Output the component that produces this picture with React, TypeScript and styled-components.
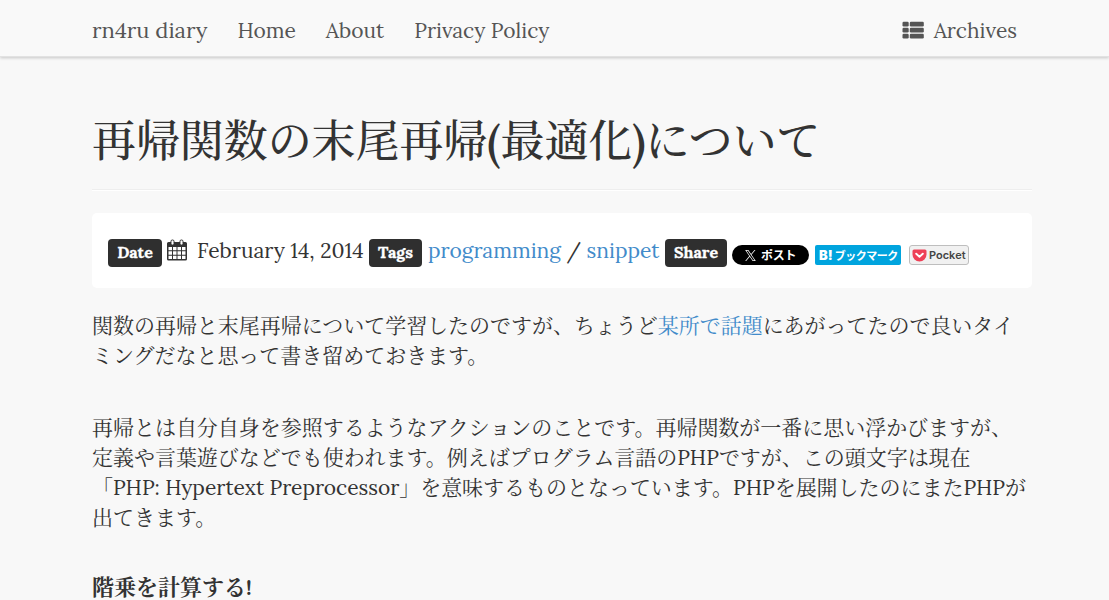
import React from "react";
import styled, { createGlobalStyle } from "styled-components";

const body = `Lora, "Noto Serif CJK JP", "Noto Sans CJK JP", serif`;

const GlobalStyle = createGlobalStyle`
  * { box-sizing: border-box; }
  body { margin: 0; background: #f8f8f8; color: #333; overflow: hidden; }
`;

const Page = styled.div`
  height: 600px;
  overflow: hidden;
  font: 21px/30px ${body};
`;

const NavBar = styled.header`
  height: 57px;
  padding: 0 92px;
  display: flex;
  align-items: center;
  background: #f9f9f9;
  border-bottom: 1px solid #e2e2e2;
  box-shadow: 0 1px 3px rgba(0, 0, 0, 0.2);
`;

const NavItem = styled.a`
  display: flex;
  align-items: center;
  margin-right: 30px;
  padding-top: 5px;
  color: #555;
  white-space: nowrap;
`;

const Brand = styled(NavItem)`
  padding-top: 3px;
  font-size: 22px;
`;

const NavEnd = styled(NavItem)`
  margin: 0 0 0 auto;
  padding-top: 5px;
  gap: 10px;

  svg { margin-top: -2px; }
`;

const Article = styled.main`
  width: 940px;
  margin-left: 92px;
`;

const Title = styled.h1`
  margin: 0;
  height: 133px;
  padding-top: 60px;
  border-bottom: 1px solid #eee;
  box-shadow: 0 1px 0 #fff;
  font-size: 44px;
  line-height: 49px;
  font-weight: 500;
  letter-spacing: -0.08px;
  white-space: nowrap;
`;

const Meta = styled.section`
  display: flex;
  height: 75px;
  margin-top: 23px;
  padding: 26px 16px 0;
  border-radius: 5px;
  background: #fff;
`;

const Label = styled.span<{ $width: number }>`
  flex: none;
  width: ${(p) => p.$width}px;
  height: 28px;
  border-radius: 4px;
  background: #2f2f2f;
  color: #fff;
  font: 700 16px/27px ${body};
  -webkit-text-stroke: 0.3px #fff;
  text-align: center;
`;

const MetaText = styled.div<{ $width: number; $indent: number }>`
  flex: none;
  width: ${(p) => p.$width}px;
  height: 24px;
  padding-left: ${(p) => p.$indent}px;
  line-height: 24px;
  white-space: nowrap;
`;

const DateText = styled(MetaText)`
  display: flex;
  gap: 10px;
`;

const Link = styled.a`
  color: #428bca;
`;

const Shares = styled.div`
  display: flex;
  gap: 6px;
  margin: 6px 0 0 5px;
  color: #fff;
  font: 700 12px/20px "Noto Sans CJK JP", sans-serif;
`;

const PostButton = styled.span`
  width: 77px;
  height: 20px;
  border-radius: 10px;
  background: #000;
  display: flex;
  align-items: center;
  padding-left: 13px;
  gap: 5px;
  font-weight: 700;
  line-height: 18px;
  letter-spacing: -0.2px;
  white-space: nowrap;
`;

const HatenaButton = styled.span`
  width: 86px;
  height: 20px;
  border-radius: 2px;
  background: #00a4de;
  display: flex;
  align-items: center;
  padding-left: 4px;
  gap: 2px;
  font-size: 11px;
  letter-spacing: -0.5px;
  white-space: nowrap;

  b { font: 900 13px/20px Inter, sans-serif; letter-spacing: 0; }
`;

const PocketButton = styled.span`
  width: 60px;
  height: 20px;
  margin-left: 2px;
  border: 1px solid #bebebe;
  border-radius: 3px;
  background: #f1f1f1;
  color: #444;
  display: flex;
  align-items: center;
  padding-left: 2px;
  gap: 2px;
  font: 600 11px/18px Inter, sans-serif;
`;

const Paragraph = styled.p<{ $top: number }>`
  margin: ${(p) => p.$top}px 0 0;
  letter-spacing: -0.03px;
`;

const Line = styled.span`
  display: block;
  height: 30px;
  white-space: nowrap;
`;

const SubTitle = styled.h4`
  margin: 39px 0 0;
  font-size: 22px;
  line-height: 30px;
  font-weight: 700;
`;

const ListIcon = () => (
  <svg width="22" height="18" viewBox="0 0 22 18" fill="#555">
    {[0.7, 6.7, 12.7].map((y) => (
      <React.Fragment key={y}>
        <rect x="0.5" y={y} width="6.2" height="4.8" rx="1.2" />
        <rect x="7.8" y={y} width="14" height="4.8" rx="1.2" />
      </React.Fragment>
    ))}
  </svg>
);

const CalendarIcon = () => (
  <svg width="20" height="22" viewBox="0 0 20 22">
    <path fill="#333" fillRule="evenodd" d="M1.5 3H18.5Q20 3 20 4.5V20Q20 21.500 18.500 21.500H1.500Q0 21.500 0 20V4.500Q0 3 1.500 3ZM1.500 8V11.300H5V8ZM6 8V11.300H9.500V8ZM10.500 8V11.300H14V8ZM15 8V11.300H18.500V8ZM1.500 12.300V15.700H5V12.300ZM6 12.300V15.700H9.500V12.300ZM10.500 12.300V15.700H14V12.300ZM15 12.300V15.700H18.500V12.300ZM1.500 16.700V20H5V16.700ZM6 16.700V20H9.500V16.700ZM10.500 16.700V20H14V16.700ZM15 16.700V20H18.500V16.700Z" />
    <rect x="4" y="1" width="3" height="5" rx="1.3" fill="#fff" stroke="#333" />
    <rect x="13" y="1" width="3" height="5" rx="1.3" fill="#fff" stroke="#333" />
  </svg>
);

const XIcon = () => (
  <svg width="11" height="11" viewBox="0 0 24 24" fill="#fff">
    <path d="M14.200 10.200 22.800 0H20.700L13.300 8.800 7.300 0H.4L9.400 13.300.4 24H2.500L10.400 14.700 16.700 24H23.600ZM3.200 1.600H6.400L20.700 22.500H17.500Z" />
  </svg>
);

const PocketIcon = () => (
  <svg width="15" height="13" viewBox="0 0 15 13">
    <path fill="#ee4056" d="M2 .5H13Q14.500 .5 14.500 2V5.500A7 7 0 0 1 .5 5.500V2Q.5 .5 2 .5Z" />
    <path d="M4.200 4.700 7.500 7.800 10.800 4.700" fill="none" stroke="#fff" strokeWidth="1.900" strokeLinecap="round" strokeLinejoin="round" />
  </svg>
);

export default function App() {
  return (
    <Page>
      <GlobalStyle />
      <NavBar>
        <Brand>rn4ru diary</Brand>
        <NavItem>Home</NavItem>
        <NavItem>About</NavItem>
        <NavItem>Privacy Policy</NavItem>
        <NavEnd><ListIcon />Archives</NavEnd>
      </NavBar>
      <Article>
        <Title>再帰関数の末尾再帰(最適化)について</Title>
        <Meta>
          <Label $width={54}>Date</Label>
          <DateText $width={207} $indent={5}><CalendarIcon />February 14, 2014</DateText>
          <Label $width={53}>Tags</Label>
          <MetaText $width={243} $indent={6}>
            <Link>programming</Link> / <Link>snippet</Link>
          </MetaText>
          <Label $width={62}>Share</Label>
          <Shares>
            <PostButton><XIcon />ポスト</PostButton>
            <HatenaButton><b>B!</b>ブックマーク</HatenaButton>
            <PocketButton><PocketIcon />Pocket</PocketButton>
          </Shares>
        </Meta>
        <Paragraph $top={23}>
          <Line>関数の再帰と末尾再帰について学習したのですが、ちょうど<Link>某所で話題</Link>にあがってたので良いタイ</Line>
          <Line>ミングだなと思って書き留めておきます。</Line>
        </Paragraph>
        <Paragraph $top={42}>
          <Line>再帰とは自分自身を参照するようなアクションのことです。再帰関数が一番に思い浮かびますが、</Line>
          <Line>定義や言葉遊びなどでも使われます。例えばプログラム言語のPHPですが、この頭文字は現在</Line>
          <Line>「PHP: Hypertext Preprocessor」を意味するものとなっています。PHPを展開したのにまたPHPが</Line>
          <Line>出てきます。</Line>
        </Paragraph>
        <SubTitle>階乗を計算する!</SubTitle>
      </Article>
    </Page>
  );
}
